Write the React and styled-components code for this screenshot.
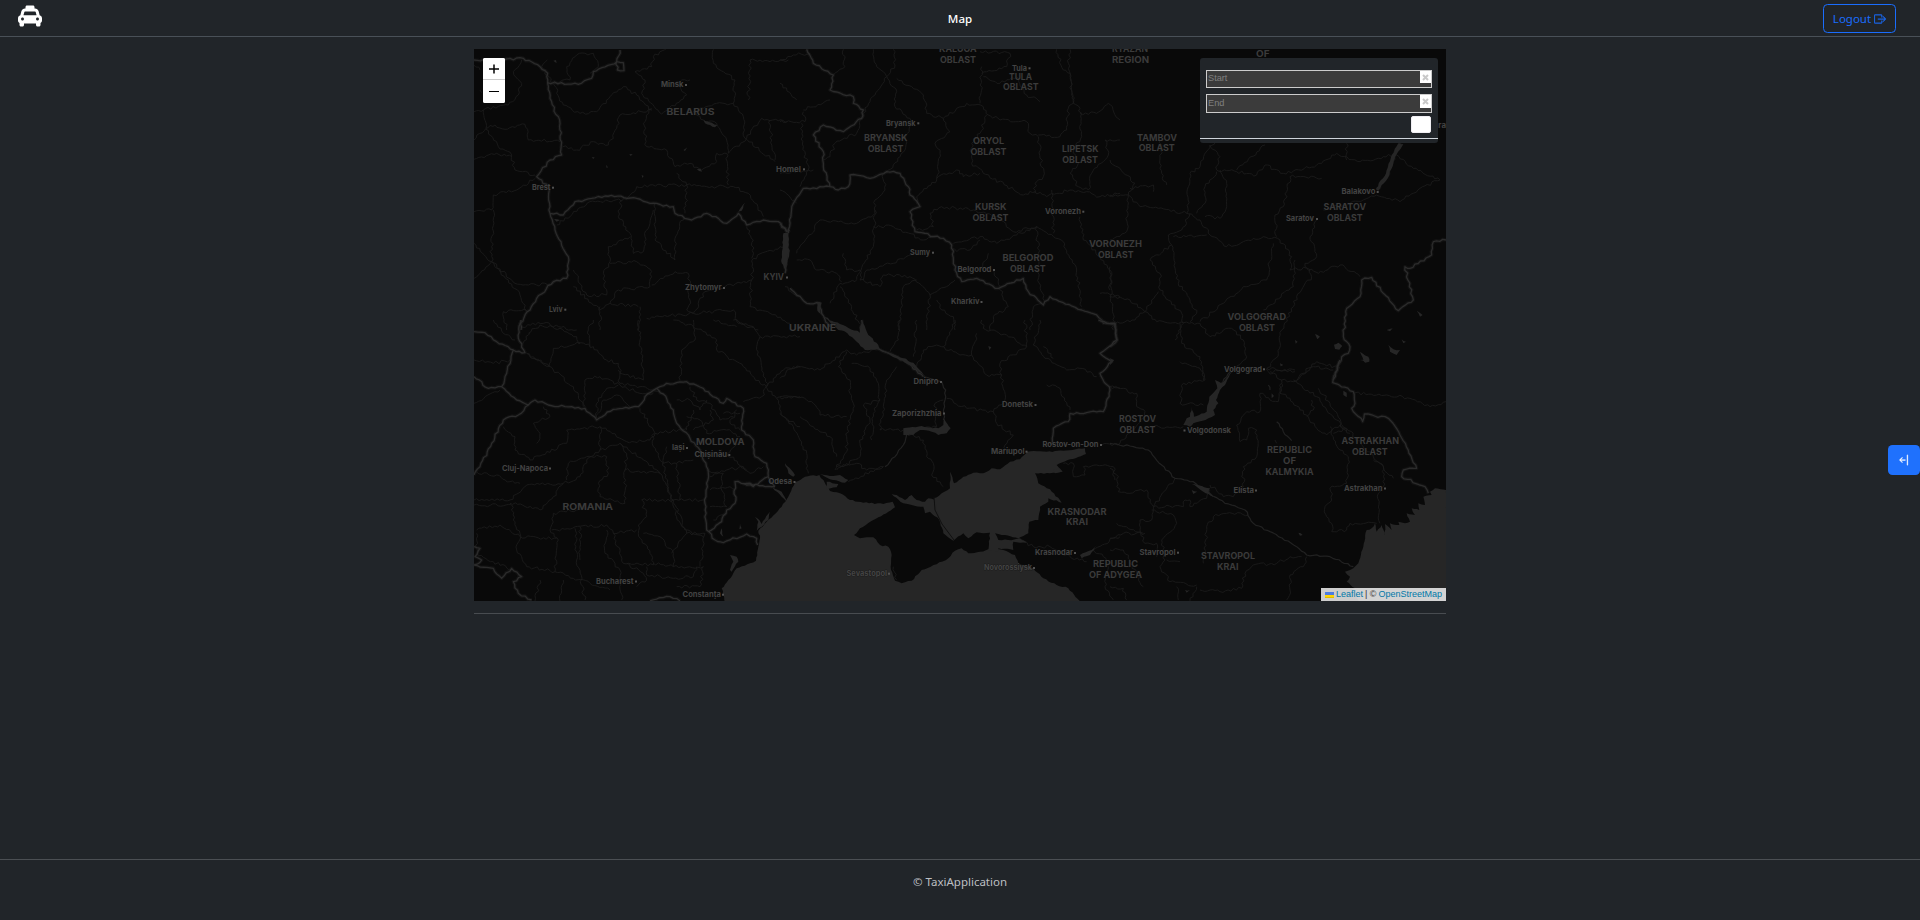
import React from "react";
import styled, { createGlobalStyle } from "styled-components";
import { FaTaxi } from "react-icons/fa";
import { BsBoxArrowRight, BsArrowBarLeft } from "react-icons/bs";

const GlobalStyle = createGlobalStyle`
  *, *::before, *::after { box-sizing: border-box; }
  body {
    margin: 0;
    background: #212529;
    color: #dee2e6;
    font: 11.5px/18px "Noto Sans", "Open Sans", sans-serif;
  }
`;

const Page = styled.div`
  display: flex;
  flex-direction: column;
  height: 920px;
  overflow: hidden;
`;

const Header = styled.header`
  display: grid;
  grid-template-columns: 1fr auto 1fr;
  align-items: center;
  height: 37px;
  padding: 0 24px 0 18px;
  border-bottom: 1px solid #495057;
`;

const Brand = styled.a`
  display: flex;
  color: #fff;
  padding-bottom: 4px;
  svg { width: 24px; height: 24px; }
`;

const Title = styled.h1`
  margin: 0 -3px 0 3px;
  padding-top: 1px;
  color: #fff;
  font-size: 11.5px;
  font-weight: 500;
`;

const LogoutButton = styled.button`
  display: flex;
  align-items: center;
  justify-content: center;
  justify-self: end;
  gap: 3px;
  width: 73px;
  height: 29px;
  padding: 1px 0 0;
  border: 1px solid #1a6dfd;
  border-radius: 4.5px;
  background: transparent;
  color: #1a6dfd;
  font: inherit;
  svg { width: 12px; height: 12px; stroke: currentColor; stroke-width: 0.4; }
`;

const Main = styled.main`
  flex: 1;
  width: 972px;
  margin: 0 auto;
  padding-top: 12px;
`;

const MapFrame = styled.section`
  position: relative;
  height: 552px;
  overflow: hidden;
  background: #090909;
`;

const MapDrawing = styled.svg`
  display: block;
  width: 100%;
  height: 100%;
  font-family: Inter, "Open Sans", sans-serif;
`;

const ZoomControl = styled.div`
  position: absolute;
  top: 9px;
  left: 9px;
  display: flex;
  flex-direction: column;
  width: 22px;
  border-radius: 2px;
  overflow: hidden;
  background: #fff;
`;

const ZoomButton = styled.button`
  display: flex;
  align-items: center;
  justify-content: center;
  height: 21px;
  padding: 1px 0 0;
  border: 0;
  background: #fff;
  color: #000;
  & + & { height: 24px; border-top: 1px solid #ccc; }
`;

const RoutePanel = styled.div`
  position: absolute;
  top: 9px;
  right: 8px;
  display: flex;
  flex-direction: column;
  gap: 6px;
  width: 238px;
  height: 85px;
  padding-top: 12px;
  border-radius: 3px;
  background: #212529;
`;

const Field = styled.div`
  display: flex;
  justify-content: space-between;
  height: ${(p) => p.$height}px;
  margin: 0 6px;
  border: 1px solid #ccc;
  background: #3b3b3b;
`;

const FieldInput = styled.input`
  flex: 1;
  min-width: 0;
  padding: 0 0 2px 1px;
  border: 0;
  outline: 0;
  background: transparent;
  color: #ccc;
  font: 9.2px "Liberation Sans", Arial, sans-serif;
  &::placeholder { color: #808080; }
`;

const ClearButton = styled.button`
  display: flex;
  align-items: center;
  justify-content: center;
  width: 11px;
  height: ${(p) => p.$height}px;
  padding: 0;
  border: 0;
  background: #fff;
  color: #c8c8c8;
`;

const PanelActions = styled.div`
  display: flex;
  justify-content: flex-end;
  height: 23px;
  margin-top: -3px;
  padding-right: 7px;
  border-bottom: 1px solid #ced4da;
`;

const AddStop = styled.button`
  width: 20px;
  height: 17px;
  padding: 0;
  border: 1px solid #f0eef3;
  border-radius: 2px;
  background: #fff;
`;

const Attribution = styled.div`
  position: absolute;
  right: 0;
  bottom: 0;
  display: flex;
  align-items: center;
  gap: 2.2px;
  height: 13px;
  padding: 0 4px;
  background: rgba(255, 255, 255, 0.8);
  color: #333;
  font: 9px/13px "Liberation Sans", Arial, sans-serif;
  white-space: nowrap;
`;

const MapLink = styled.a`
  color: #0078a8;
`;

const Divider = styled.hr`
  height: 1px;
  margin: 12px 0 0;
  border: 0;
  background: #484c50;
`;

const Footer = styled.footer`
  display: flex;
  justify-content: center;
  height: 61px;
  padding-top: 13px;
  border-top: 1px solid #4b4f53;
  color: #bcbfc2;
`;

const DrawerToggle = styled.button`
  position: absolute;
  top: 445px;
  right: 0;
  display: flex;
  align-items: center;
  justify-content: center;
  width: 32px;
  height: 30px;
  padding: 0;
  border: 0;
  border-radius: 4.5px;
  background: #1f71fd;
  color: #fff;
  svg { width: 12px; height: 12px; stroke: currentColor; stroke-width: 0.5; }
`;

/* The map is cut in sheets. Each sheet has its own origin and is drawn at three units per pixel. */
const sheets = [
  {
    x: 460, y: 40,
    thin: [
      "M185 60L160 95 185 130 175 165 145 195 70 210 42 215M70 210L78 265 42 300M78 265L105 255 135 268 195 253 205 300 300 305M78 268L115 320 155 345 165 390 225 405M42 358L110 340 155 350",
      "M42 75L60 90M60 150L65 158M262 60L245 80 280 130 330 120 320 80 350 45 400 40 415 80 390 100M285 125L290 160 310 195 360 220 410 215 450 170 490 140 530 165 575 210 480 225 470 265 445 315 400 305 350 330 308 320",
      "M620 25L580 50 575 80 525 95 555 120 545 160 605 222 680 165 650 125 690 120M575 205L550 250 560 320 620 330 645 380 690 370 725 390 770 365 770 340 800 340 805 435",
      "M700 215L730 240 770 250 800 300 805 340 860 295 905 235 980 245M760 28L760 70 825 120 820 190 770 190 700 215M820 190L850 230 855 295 945 365M865 180L870 60 930 65 985 60M930 240L935 300 945 360",
      "M225 415L170 450 100 465 95 510 42 515M100 510L95 620 95 665 42 610M95 665L165 730 270 735 285 725M95 665L42 715M95 665L180 765 200 812",
      "M290 555L390 485 500 478 530 440 650 435 680 435 740 440 820 440 865 460 910 530",
      "M650 400L680 435 675 520M485 480L475 530 510 580 520 640 550 635 555 590 580 510M585 490L585 600 645 660 645 595 670 530M510 590L445 620 450 665 430 700 440 765 380 765 340 690",
      "M450 670L530 665 575 695 570 740 475 750 450 790 535 800M575 735L645 695 685 700 690 780 680 810 700 820 735 755 795 740 875 720 880 655 960 620 980 618M860 560L880 600 875 655M700 820L820 810 835 850 895 870M875 720L870 800 930 820 990 850",
      "M140 870L130 815 200 812M420 800L420 870M560 835L700 820M540 800L535 870M180 860L250 850 350 870M340 740L420 810 450 790",
    ],
    thick: [
      "M42 60L100 62 190 55 240 80 263 100 263 130 270 175 300 250 305 345 270 360 230 410 265 440 270 520 285 570 325 650 320 715 280 725 230 775 180 850 183 870",
      "M263 128L355 133 395 115 400 95 470 65 480 30M470 65L490 68 492 92 472 90 470 65",
      "M270 520L310 525 345 485 435 468 530 475 570 490 640 500 645 520 695 540 740 520 800 550 835 520 860 555 910 540 955 545 980 575 990 570",
    ],
    water: [
      "M972 580L985 580 988 640 978 690 965 665Z",
      "M710 388L722 386 726 395ZM280 62L288 60 290 70ZM395 352L404 352 400 357ZM545 405L551 408 547 414ZM508 342L518 343 512 348ZM835 515L855 488 845 512Z",
      "M730 240L772 255 765 262 735 250ZM438 374L444 382 440 384ZM282 537L300 540 290 545ZM670 330L682 322 675 333Z",
    ],
  },
  {
    x: 780, y: 40,
    thin: [
      "M0 60L40 45 90 40M190 28L195 80 160 105M280 28L290 80 320 110 270 185 240 240 230 280 165 310 150 350 130 360M340 28L345 75 320 110 350 155 345 200 390 235 375 330 320 400",
      "M350 115L395 140 430 165 440 220 490 235 510 275 465 310 480 340 470 420 410 470M490 235L560 190 610 200 625 225 660 240 740 245 750 280 775 290 790 410 765 430 765 460",
      "M605 80L600 190M605 100L680 80 690 40 600 35M610 110L660 130 710 110 740 165 780 185M830 28L850 90 870 100 880 190 865 205 860 270 840 290 775 285",
      "M870 28L865 70 880 190 900 205 905 290 880 330 895 370 870 400 895 440 925 450 935 400 985 345 975 300 1020 300M900 220L950 220 985 190 1020 240",
      "M620 225L600 280 575 310 575 370 610 400 730 465 765 455 800 470 870 450 920 455 960 470 1020 460M470 415L530 390 550 410 600 400M0 400L100 390M0 130L50 180M70 210L150 180M70 215L75 245 0 245M65 250L70 320 85 390 60 440",
      "M310 400L315 450 285 480 285 520 230 550 120 540 50 640M285 510L280 620 225 725 180 730 150 790M280 560L340 560 430 600 470 590M250 720L260 690 340 670 400 640M410 470L410 490",
      "M410 570L460 560 450 520 485 500 580 510 650 530 700 575 770 560 850 605 860 640 890 690 905 800M520 610L600 590 650 610 770 560 775 640 770 690 795 790M515 630L570 630 600 600",
      "M50 660L90 660 110 690 170 700 185 725M190 640L200 690 240 690 240 720 300 740 310 705 390 710 450 765M0 450L50 490M15 740L60 770M440 870L450 765 525 720M470 780L485 810 520 830 525 870M660 740L670 780 685 800 640 830 630 870M750 870L760 800 785 790M600 690L625 640M640 690L660 740",
      "M180 740L215 800 245 870M355 870L370 740 410 720M815 450L820 580M900 530L910 600 960 650 990 690 1000 870M1020 770L960 760",
    ],
    thick: [
      "M80 28L100 70 160 105 150 150 220 170 220 190 250 210 245 235 190 275 130 255 100 285 130 335 130 380 150 440 175 450 205 440 210 405 270 415 320 395 360 400 385 440 390 465 420 500 390 515 405 575 490 595 515 615 525 690 545 725 590 715 645 745 730 715 745 755 790 795 810 770 905 810 950 825 970 850 1005 850",
      "M150 440L70 445 40 490 25 580M0 550L20 575",
      "M15 580L15 700M30 745L80 790 120 790 125 820 150 860",
    ],
    water: ["M10 580L25 580 24 640 18 690 5 670ZM110 785L125 788 122 822 112 812ZM120 820L195 870 175 870Z"],
  },
  {
    x: 1110, y: 140,
    thin: [
      "M0 60L75 130 55 165 0 165M55 165L50 275 0 300M55 165L90 200 145 205 230 220 240 100 270 80 300 15 330 50 320 90 380 95 440 105 465 75 520 100 620 75 680 40 750 65 820 50 860 45 910 85 990 120",
      "M330 90L350 130 350 200 330 235 285 230M320 95L285 140 285 190 260 220M230 220L270 240 300 285 350 320 400 305 460 290 510 300 545 350 540 390 590 385 625 400 690 375 750 410",
      "M240 220L215 270 175 285 185 315 120 360 150 400 150 450 215 520 220 550M190 290L290 285M185 315L205 430 240 480 260 520 240 545M270 545L340 490 400 440 470 420 490 310M105 515L145 455M0 470L60 480 105 515 60 545 0 550M105 515L140 545 270 550 300 590 340 570 365 565 400 600 410 650 360 700",
      "M635 115L540 110 520 200 495 225 500 290M620 240L600 290 620 350 585 370 605 410 560 470 550 500 515 570 505 640 470 690M555 360L550 440 460 510M150 0L155 100 170 135M300 20L330 0M380 90L465 15M710 10L710 60M990 120L930 145 870 185 800 165 720 190 640 210",
      "M210 550L215 610 270 650 280 720M470 685L555 695M560 720L610 680 670 690M220 550L195 600M0 380L0 450M60 145L130 135 130 155",
    ],
    thick: [
      "M1008 300L970 305 965 345 900 385 885 380 910 480 865 512 820 460 785 412 755 420 750 470 710 505 700 590 720 620 715 640 695 650 670 720",
      "M870 10L845 65 830 110 800 150",
      "M0 550L15 550 22 600 0 620",
    ],
    water: [
      "M865 10L880 12 855 50 838 105 805 152 798 145 828 100 845 45Z",
      "M672 614L685 608 697 618 688 629 675 627ZM750 635L775 650 778 665 765 668ZM835 615L850 628 870 630 860 645 840 635ZM875 598L888 605 880 610ZM920 512L938 525 930 530ZM830 570L848 565 840 574ZM555 600L563 605 557 611ZM510 670L520 675 512 679ZM615 582L630 590 622 598ZM0 655L12 660 0 675Z",
    ],
  },
  {
    x: 460, y: 320,
    thin: [
      "M210 40L190 70M205 40L240 15 300 25 350 50 360 70 280 85 268 140 200 100M355 70L400 80 440 120 475 130 480 160 550 180 540 60 535 0M400 0L385 30 390 80M100 0L130 40 165 60",
      "M475 150L480 190 540 200 600 215M370 260L375 180 420 170 480 195 540 220 580 220M410 290L410 250 440 205 475 195M410 295L430 240 470 225 510 260M660 180L665 90 705 60 700 0M640 0L700 20 770 60 770 90 850 140 900 190 920 200",
      "M920 200L970 150 1020 140M915 200L950 235 1020 230M850 245L905 230 920 200 890 80 900 50 1020 50M820 0L880 20 900 50M760 0L830 20M950 235L970 290 1020 320M42 120L100 130 150 120M42 250L120 210",
      "M200 100L280 150 340 200 375 260M130 320L165 350 165 390 210 420 320 370 320 330 420 320 500 365 570 360 585 340 680 325M250 260L270 290 220 310 240 340 230 370",
      "M420 320L420 390 480 370 500 400 495 450 600 460M420 390L380 420 360 470 310 490 200 495 150 540 42 540M310 490L280 530 240 570 150 550M320 480L325 430 380 410 440 410 445 460 415 490 420 530 495 550 495 450",
      "M480 370L550 420 600 460 640 540 675 630 730 650M540 265L580 330 580 380 615 450 625 510 650 590 680 640M660 540L650 430 610 430 620 380M650 430L700 420M640 540L730 540M560 590L545 540 640 540M560 590L535 615 535 640 570 700 580 735 490 730 460 640 530 630",
      "M42 460L110 465 150 485 180 490M42 555L155 555 160 600 180 640 170 690 200 740 285 755 295 660 270 630 280 580 380 565M50 630L120 615 180 650 290 655M275 630L440 615 460 640M345 625L350 720 375 840M360 620L360 720M440 630L435 700 480 750 485 840",
      "M285 755L340 775 390 790 450 810M240 780L225 843M155 750L100 725 50 700 50 640M580 730L640 740 730 740 720 800 650 800M560 740L560 765 640 775 700 770 710 740M635 700L680 640 735 640 720 740M640 740L640 700M500 730L550 760 560 780 530 800M300 843L310 780M550 640L600 650 640 700",
      "M690 200L710 240 750 250 780 300 820 290M650 240L690 240 720 270 740 240M680 290L720 300 740 340 800 330 840 350M750 270L760 300 700 330M790 280L840 280M830 270L810 310 840 330M750 470L800 450 850 440 870 460 910 440M750 510L810 500 825 510M750 560L800 560M790 460L785 510 800 560M700 270L680 330M740 450L790 460M850 360L800 400 860 450M760 600L800 580",
    ],
    thick: [
      "M42 35L75 38 110 65 160 90 195 98 175 55 183 0M160 90L140 160 125 200 85 205 42 170M125 200L170 240 205 255 225 240 265 255 375 265 410 300 460 268 535 260 555 230 590 205 610 222 640 270 650 310 690 355 720 390 745 460 735 550 740 630 765 660 790 668 860 642 890 655 893 675",
      "M205 255L175 285 130 300 95 370 60 440 42 465",
      "M590 205L620 190 680 185 730 205 790 250 800 235 850 265 845 330 880 360 885 410 920 430 925 470 945 500",
      "M945 500L860 490 825 485 825 550 800 570 785 605 745 635",
      "M42 680L60 685 45 710 65 720 42 735M42 735L100 745 125 775 155 745 185 770 160 785 175 820 215 840",
      "M570 843L630 830 660 843M850 490L880 500 900 485 925 470",
    ],
    water: ["M938 503L965 515 980 545 965 530ZM890 632L895 605 885 590 898 600 905 612 930 575 925 600ZM810 750L820 725 810 705 830 710 835 725 815 755ZM785 625L790 650 780 640ZM840 610L845 625 838 628ZM975 430L1005 465 1000 470 985 460Z"],
  },
  {
    x: 780, y: 320,
    thin: [
      "M0 175L40 140 120 150 200 90 230 105 290 90M200 95L175 140M215 130L270 145 295 190 300 240 250 255 270 300 240 370 240 410 170 450M175 140L210 180 210 220 220 250 200 350 200 395 165 450",
      "M0 230L50 230 100 250 120 285 200 290M0 280L40 320 60 360 80 400 85 460M60 290L100 320 150 350 170 410M360 0L355 60 330 95M410 0L405 80 400 110M410 140L430 90 470 75 540 105 575 105 590 40M525 0L515 30 490 80",
      "M575 105L620 165 665 165 675 240 640 275 560 265 500 235M605 0L610 25 680 45 740 80 735 0M740 80L660 130 665 165M780 0L760 75 795 115 860 150 900 145 950 170M790 80L820 115M800 195L840 205 870 270",
      "M350 140L320 180 310 260 300 330 370 330M300 240L280 280 275 360M380 340L430 360 440 410 460 430 455 465 490 500M640 275L650 310 700 345 675 375 680 395M490 240L465 250 470 320 430 325M170 440L230 430 260 450 310 440 205 485",
      "M965 375L1020 370M990 200L1020 205M850 430L880 430 880 470 915 465 910 440 950 435 1000 440 1005 480M720 660L760 680 810 680 870 710 920 725M940 690L1000 655 1020 650M340 740L350 780M940 690L970 710 985 740 975 800 1000 840",
    ],
    thick: [
      "M955 0L980 10 1005 10 1010 60 960 100 995 125 960 160 990 210 970 275 870 280 865 305 820 325 815 375",
      "M245 0L245 40 260 60M290 85L380 125 430 170",
    ],
    river: [
      "M430 170L485 185 497 210 495 240 490 300M380 345L370 375 345 410 315 440",
    ],
    water: [
      "M45 487L75 470 118 465 135 490 150 513 180 520 210 540 250 548 310 552 338 545 345 562 325 575 280 600 240 625 222 645 240 655 280 652 300 675 325 680 335 705 332 740 345 782 365 790 395 782 425 750 470 733 505 715 525 692 545 685 565 700 600 695 635 685 670 690 705 705 715 730 760 745 790 775 830 795 865 805 905 848-165 848-175 805-155 780-130 745-90 730-72 722-65 680-60 655-65 632 5 560 25 530Z",
      "M462 535L485 520 510 505 510 455 522 490 550 470 580 458 610 460 635 445 660 448 690 425 720 418 742 395 800 395 850 392 915 385 918 402 870 418 830 435 848 455 810 460 765 460 775 490 810 508 845 548 805 535 805 545 780 560 775 600 748 605 745 640 715 655 675 645 645 640 655 660 685 660 720 655 740 668 700 665 700 690 655 685 655 695 625 690 630 638 590 637 565 655 550 640 520 662 490 640 478 600 465 570Z",
      "M150 0L180 12 240 38 245 0 265 45 295 75 300 88 255 90 230 65ZM300 88L370 115 400 128 438 170 425 160 390 135 350 115Z",
      "M370 325L425 318 475 325 490 315 492 295 512 325 500 340 475 345 455 335 420 330 400 345 370 345Z",
      "M120 462L160 468 180 465 205 480 195 488 150 478ZM140 485L175 492 170 502 140 508ZM335 522L350 525 375 540 395 525 410 540 435 545 445 535 465 540 478 600 450 575 435 580 430 560 395 555 370 550ZM625 78L634 82 628 90ZM900 705L935 690 950 675 930 705 905 715ZM820 450L835 445 845 455 825 460Z",
    ],
  },
  {
    x: 1110, y: 360,
    thin: [
      "M0 80L40 85 60 100 80 100 80 140 105 155 100 175 30 250M270 25L285 60 220 70 210 130 280 135M130 200L220 200M480 35L555 30M470 30L515 60 550 65 620 5 690 25M515 70L510 100 540 115 570 150 590 165 620 205 650 225 690 195 720 220M550 60L620 110 650 150 680 180 710 215M625 85L660 130 700 200",
      "M515 60L505 125 480 120 450 100 450 155 410 155 380 195 390 245 410 240 415 205 440 210 440 290 400 320 400 380 370 410 340 410 300 375",
      "M730 100L830 105 900 115 960 140 1008 125M670 230L690 270 715 290 710 370 660 385 665 420 645 440 650 470 665 490 665 515 710 510 720 490 800 490M670 220L710 205 790 290 850 355M790 300L820 320 820 380 805 400 810 490",
      "M0 325L25 350 25 395 60 400 110 390 130 440 125 480 90 480 90 510 105 550 140 550 140 590M130 440L195 355M130 440L220 440 225 420 240 420 240 440 290 415 300 390M125 450L190 465 200 490 155 540 165 600 150 620 180 665 260 675M105 520L40 520 0 535M20 490L100 520",
      "M415 465L350 460 310 470 290 500 285 580 280 610M590 590L580 620 540 645 540 690 530 720M575 590L540 590 500 610 430 615 405 640 395 685 330 695 270 690M0 570L40 570 60 600M170 600L210 605M240 723L260 680M0 680L40 685 50 720M200 680L205 720M60 610L100 680",
      "M605 120L610 150 590 170M210 5L270 25M495 240L500 250M660 200L670 230",
    ],
    thick: [
      "M690 0L668 68 730 95 735 130 725 145 758 185 763 162 835 175 870 225 920 325 880 330 875 350 945 380 955 400",
    ],
    river: [
      "M0 250L70 260 115 270 155 315 195 355 250 365 300 400 345 430 405 450 430 490 480 515 560 560 590 585 660 590 730 620",
      "M500 185L520 215 545 242M475 75L480 90M360 35L325 80",
    ],
    water: [
      "M1008 390L975 385 960 395 965 405 940 410 945 435 925 430 928 450 905 445 915 465 890 460 900 485 885 490 865 485 868 495 840 490 845 510 825 492 825 525 815 495 800 515 795 490 785 505 770 510 760 560 745 610 730 625 705 635 720 650 710 665 735 685 725 690 750 728 1015 728Z",
      "M365 35L345 75 330 90 318 120 325 130 310 150 315 165 295 175 250 190 240 200 220 195 230 175 240 170 245 140 252 170 290 155 298 110 322 85 315 60 335 70ZM245 372L275 378 300 385 295 395 310 410 280 395 260 380ZM245 390L262 395 250 402ZM700 92L710 98 710 112 700 105ZM485 100L492 108 485 115ZM750 0L775 0 765 6ZM0 0L12 0 0 15ZM565 518L578 525 570 527ZM225 690L240 690 230 698Z",
    ],
  },
];

/* Splits every straight leg into short pieces pushed sideways, the same way on each render. */
function rough(d, step, amount) {
  let seed = d.length * 131 + 7;
  const random = () => {
    seed = (seed * 1103515245 + 12345) % 2147483648;
    return seed / 2147483648 - 0.5;
  };
  return d
    .split("M")
    .filter(Boolean)
    .map((part) => {
      const closed = part.includes("Z");
      const n = part.match(/-?\d+(\.\d+)?/g).map(Number);
      const points = [];
      for (let i = 0; i < n.length; i += 2) points.push([n[i], n[i + 1]]);
      if (closed) points.push(points[0]);
      let out = `M${points[0].join(" ")}`;
      for (let i = 1; i < points.length; i++) {
        const [ax, ay] = points[i - 1];
        const [bx, by] = points[i];
        const length = Math.hypot(bx - ax, by - ay) || 1;
        const count = Math.max(1, Math.round(length / step));
        for (let k = 1; k < count; k++) {
          const t = k / count;
          const off = random() * amount;
          const x = ax + (bx - ax) * t - ((by - ay) / length) * off;
          const y = ay + (by - ay) * t + ((bx - ax) / length) * off;
          out += `L${x.toFixed(1)} ${y.toFixed(1)}`;
        }
        out += `L${bx} ${by}`;
      }
      return closed ? `${out}Z` : out;
    })
    .join("");
}

const drawn = sheets.map((s) => ({
  x: s.x,
  y: s.y,
  thin: s.thin.map((d) => rough(d, 8, 10)).join(""),
  thick: s.thick.map((d) => rough(d, 10, 7)).join(""),
  river: (s.river || []).map((d) => rough(d, 10, 6)).join(""),
  water: s.water.map((d) => rough(d, 9, 4)),
}));

/* text, left, right and middle line in page pixels */
const regions = [
  ["BELARUS", 666.5, 714.5, 112.7], ["KYIV", 763.5, 784, 277.5], ["UKRAINE", 789, 836, 328.7],
  ["MOLDOVA", 696, 744.5, 442], ["ROMANIA", 562.5, 613, 507],
  ["KALUGA", 939, 976.5, 49], ["OBLAST", 940, 976, 60],
  ["RYAZAN", 1112, 1148, 49], ["REGION", 1112, 1149, 60], ["OF", 1256, 1269.5, 54],
  ["TULA", 1009, 1032, 77], ["OBLAST", 1003, 1038.5, 87.7],
  ["BRYANSK", 864, 907.5, 138.3], ["OBLAST", 867.7, 903.5, 149.3],
  ["ORYOL", 973, 1004, 141], ["OBLAST", 970.5, 1006.5, 152],
  ["LIPETSK", 1062, 1098.5, 149.3], ["OBLAST", 1062.3, 1098, 160],
  ["TAMBOV", 1137, 1177, 138], ["OBLAST", 1138.7, 1174.7, 148.3],
  ["KURSK", 975, 1006.5, 207], ["OBLAST", 972.5, 1008.5, 218],
  ["BELGOROD", 1002.5, 1053.5, 258.7], ["OBLAST", 1010, 1045.5, 269.5],
  ["VORONEZH", 1089, 1142, 244], ["OBLAST", 1098, 1133.5, 255],
  ["SARATOV", 1323.5, 1366, 207.3], ["OBLAST", 1327, 1362.5, 218],
  ["VOLGOGRAD", 1227.5, 1286, 317.5], ["OBLAST", 1239, 1275, 328.5],
  ["ROSTOV", 1119, 1156, 419.5], ["OBLAST", 1119.5, 1155.5, 430.7],
  ["ASTRAKHAN", 1341.5, 1399, 441.5], ["OBLAST", 1352, 1387.5, 452.7],
  ["REPUBLIC", 1267, 1312, 450.5], ["OF", 1283, 1296, 461.3], ["KALMYKIA", 1265.5, 1313.5, 472.3],
  ["KRASNODAR", 1047.5, 1106.5, 512], ["KRAI", 1066, 1088, 522.7],
  ["REPUBLIC", 1093, 1138, 564], ["OF ADYGEA", 1089, 1142, 575],
  ["STAVROPOL", 1201, 1255, 556], ["KRAI", 1217, 1238.5, 567],
];

/* text, left, right, middle line, dot position */
const cities = [
  ["Minsk", 661, 683.5, 85, 686], ["Brest", 532, 550.5, 187.7, 553], ["Homel", 776, 801, 169.3, 804],
  ["Zhytomyr", 685, 721.5, 288, 724], ["Lviv", 549, 562.5, 309.7, 565.3], ["", 0, 0, 277.5, 787],
  ["Tula", 1012, 1027, 68.3, 1029.5], ["Bryansk", 886, 915.5, 123.3, 918.3],
  ["Voronezh", 1045, 1081, 211.7, 1083.3], ["Sumy", 910, 930, 252.7, 933],
  ["Belgorod", 957.5, 991.5, 270, 994], ["Kharkiv", 951, 979.5, 302, 981.5],
  ["Balakovo", 1341.5, 1375.5, 192, 1377.7], ["Saratov", 1286, 1314, 219, 1317],
  ["Volgograd", 1224, 1262, 369.3, 1264], ["Volgodonsk", 1187, 1231, 430.5, 1184.5],
  ["Iași", 672, 684.5, 448, 687], ["Chișinău", 694.5, 727, 455, 729.3],
  ["Cluj-Napoca", 502, 548, 468.5, 550], ["Odesa", 768.5, 792, 482, 794.5],
  ["Bucharest", 596, 633.5, 581.5, 636], ["Constanța", 682.5, 721, 594.7, 723],
  ["Dnipro", 913.5, 938.5, 382, 941], ["Zaporizhzhia", 892, 941.5, 413.5, 944],
  ["Donetsk", 1002, 1033, 405, 1035.5], ["Mariupol", 991, 1024.5, 451.7, 1026.5],
  ["Rostov-on-Don", 1042.5, 1098.5, 445, 1101], ["Krasnodar", 1035, 1073, 553, 1075],
  ["Novorossiysk", 984, 1032, 568, 1034], ["Sevastopol", 846.5, 887, 573.7, 889],
  ["Elista", 1233.5, 1254, 490.5, 1256], ["Astrakhan", 1344, 1382.5, 488.5, 1385],
  ["Stavropol", 1139.5, 1175.5, 552.7, 1178], ["Samara", 1417, 1446, 126, 1449],
];

function MapLabel({ text, left, right, middle, size, weight, fill }) {
  return (
    <text
      x={left}
      y={middle + size * 0.36 - 0.5}
      fontSize={size}
      fontWeight={weight}
      textLength={right - left}
      lengthAdjust="spacingAndGlyphs"
      fill={fill}
      stroke="#0b0b0b"
      strokeOpacity="0.4"
      strokeWidth="1"
      paintOrder="stroke"
    >
      {text}
    </text>
  );
}

function CountryMap() {
  return (
    <MapDrawing viewBox="474 49 972 552">
      {drawn.map((s, i) => (
        <g key={i} transform={`translate(${s.x} ${s.y}) scale(0.33333)`} fill="none" strokeLinejoin="round">
          <path d={s.thin} stroke="#1b1b1b" strokeWidth="2.7" />
        </g>
      ))}
      {drawn.map((s, i) => (
        <g key={i} transform={`translate(${s.x} ${s.y}) scale(0.33333)`} fill="none" strokeLinejoin="round">
          <path d={s.thick} stroke="#1d1d1d" strokeOpacity="0.4" strokeWidth="11" />
          <path d={s.thick} stroke="#2b2b2b" strokeWidth="4" />
          <path d={s.river} stroke="#212121" strokeWidth="3.6" />
          {s.water.map((d) => <path key={d} d={d} fill="#262626" />)}
        </g>
      ))}
      <path d="M934 497L935 510 942 524 954 540" fill="none" stroke="#101010" />
      {regions.map(([text, left, right, middle], i) => (
        <MapLabel key={i} text={text} left={left} right={right} middle={middle} size={9} weight={700} fill="#3b3b3b" />
      ))}
      {cities.map(([text, left, right, middle, dot]) => (
        <g key={dot}>
          {text && <MapLabel text={text} left={left} right={right} middle={middle} size={7.8} weight={700} fill="#434343" />}
          <rect x={dot - 1} y={middle - 1} width="2" height="2" fill="#505050" />
        </g>
      ))}
    </MapDrawing>
  );
}

function Stop({ label, height, clearHeight }) {
  return (
    <Field $height={height}>
      <FieldInput placeholder={label} />
      <ClearButton $height={clearHeight} aria-label="Clear">
        <svg width="7" height="7" viewBox="0 0 7 7">
          <path d="M1 1L6 6M6 1L1 6" stroke="currentColor" strokeWidth="2" />
        </svg>
      </ClearButton>
    </Field>
  );
}

export default function App() {
  return (
    <Page>
      <GlobalStyle />
      <Header>
        <Brand><FaTaxi /></Brand>
        <Title>Map</Title>
        <LogoutButton>Logout<BsBoxArrowRight /></LogoutButton>
      </Header>
      <Main>
        <MapFrame>
          <CountryMap />
          <ZoomControl>
            <ZoomButton aria-label="Zoom in">
              <svg width="10" height="10" viewBox="0 0 10 10"><path d="M0 5H10M5 .5V9.5" stroke="currentColor" strokeWidth="1.5" /></svg>
            </ZoomButton>
            <ZoomButton aria-label="Zoom out">
              <svg width="10" height="10" viewBox="0 0 10 10"><path d="M0 4.5H10" stroke="currentColor" strokeWidth="1" /></svg>
            </ZoomButton>
          </ZoomControl>
          <RoutePanel>
            <Stop label="Start" height={18} clearHeight={12} />
            <Stop label="End" height={19} clearHeight={13} />
            <PanelActions><AddStop aria-label="Add stop" /></PanelActions>
          </RoutePanel>
          <Attribution>
            <svg width="9" height="6" viewBox="0 0 9 6">
              <rect width="9" height="3" fill="#4c7be1" />
              <rect y="3" width="9" height="2" fill="#ffd500" />
              <rect y="5" width="9" height="1" fill="#e0bc00" />
            </svg>
            <MapLink>Leaflet</MapLink><span>|</span><span>©</span><MapLink>OpenStreetMap</MapLink>
          </Attribution>
        </MapFrame>
        <Divider />
      </Main>
      <Footer>© TaxiApplication</Footer>
      <DrawerToggle aria-label="Open panel"><BsArrowBarLeft /></DrawerToggle>
    </Page>
  );
}
